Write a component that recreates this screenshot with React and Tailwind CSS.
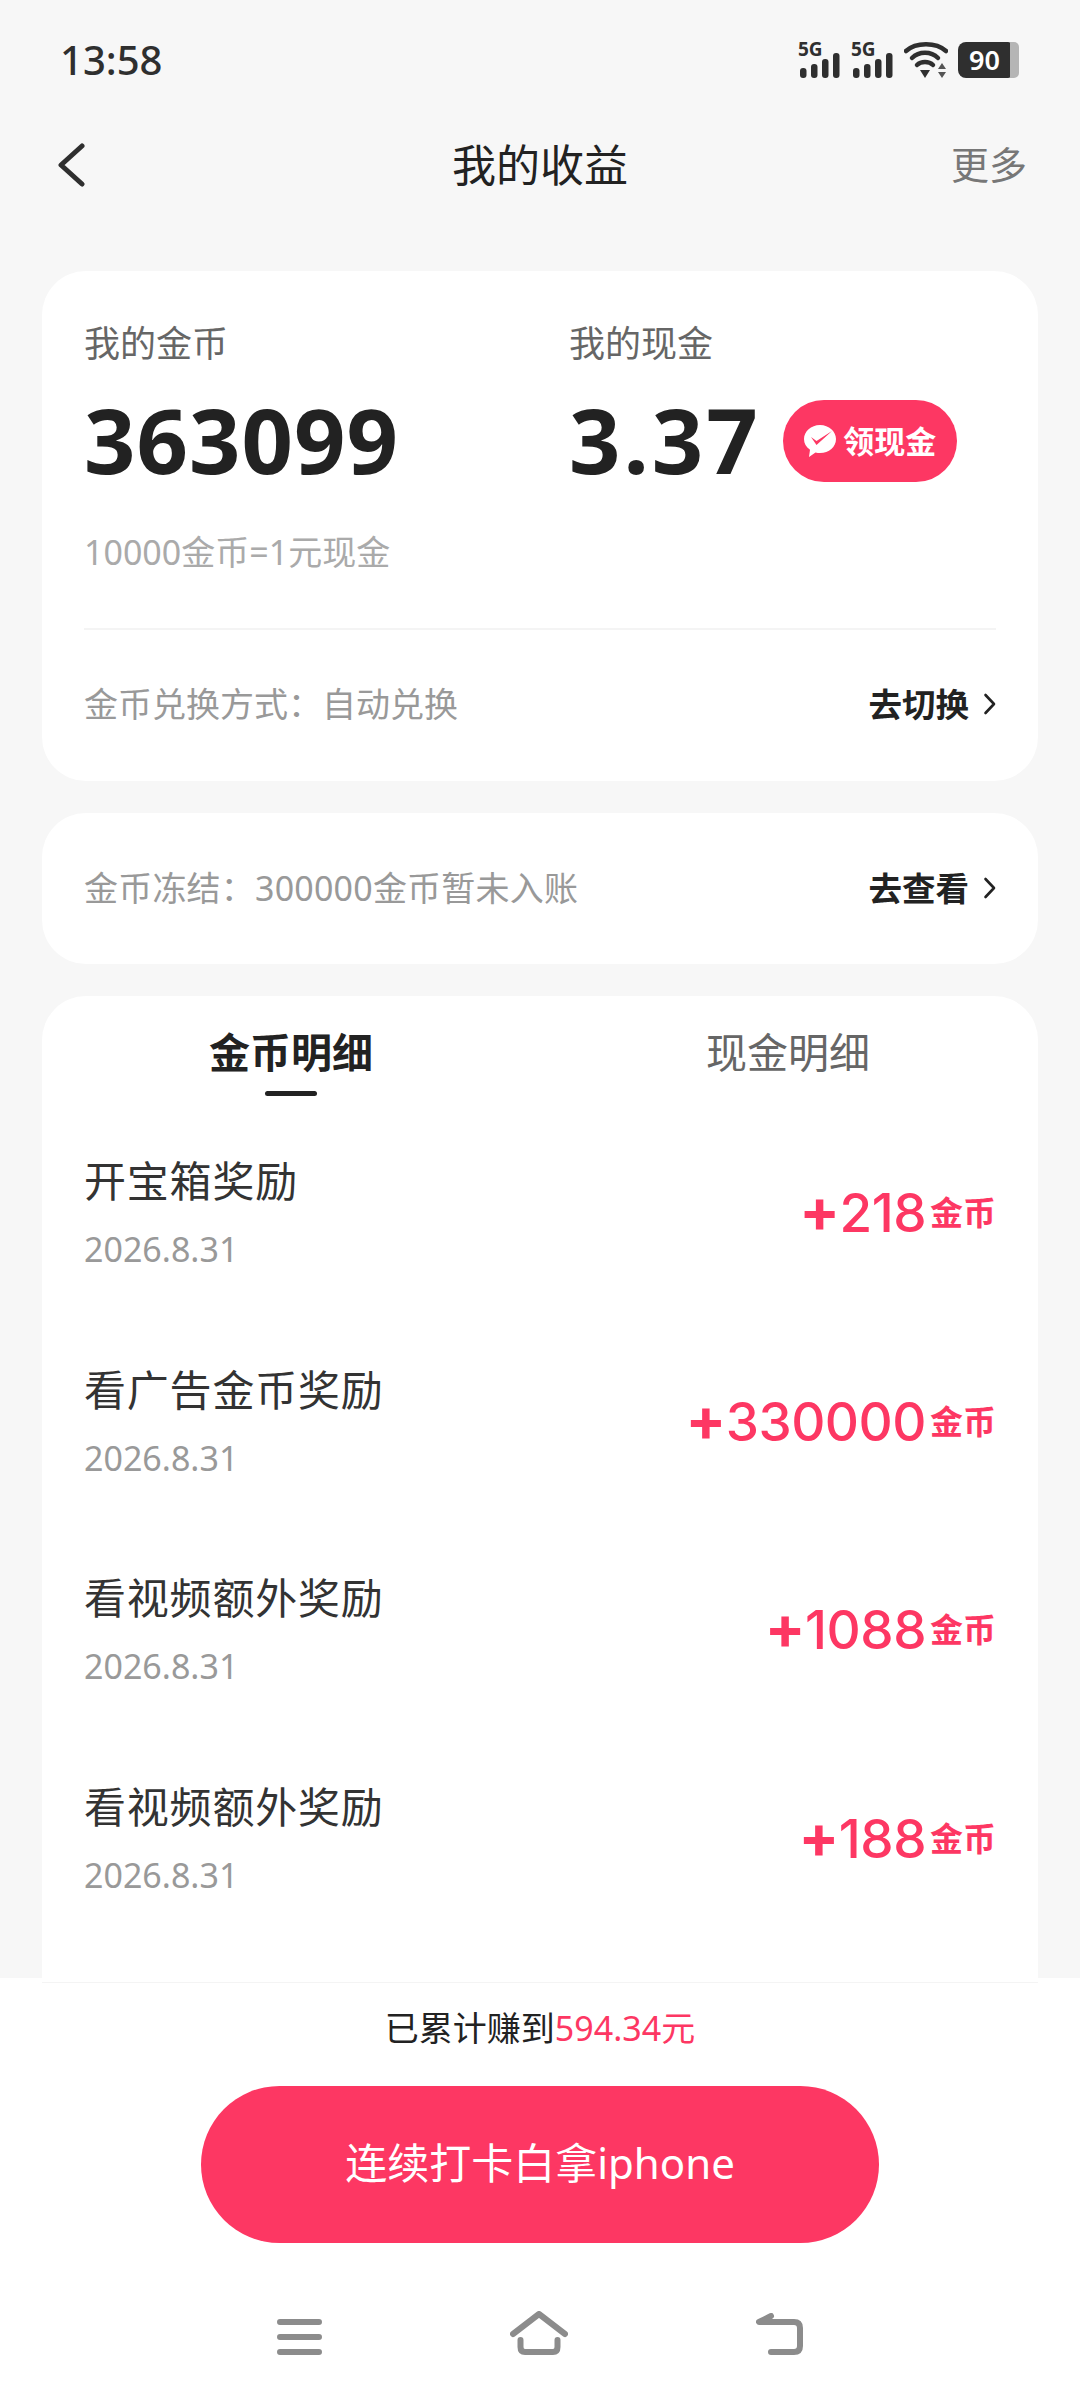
import React from "react";

const records = [
  { title: "开宝箱奖励", date: "2026.8.31", amount: "218" },
  { title: "看广告金币奖励", date: "2026.8.31", amount: "330000" },
  { title: "看视频额外奖励", date: "2026.8.31", amount: "1088" },
  { title: "看视频额外奖励", date: "2026.8.31", amount: "188" },
];

function Signal() {
  return (
    <div className="w-[42px] h-[36px] relative">
      <span className="absolute left-0 top-[-3px] text-[19px] leading-[20px] font-bold text-[#2f2f2f]">5G</span>
      <svg width="42" height="26" viewBox="0 0 42 26" className="absolute left-0 top-[11px]">
        <g fill="#2f2f2f">
          <rect x="2" y="15" width="6.5" height="10" rx="3" />
          <rect x="13" y="11" width="6.5" height="14" rx="3" />
          <rect x="24" y="6" width="6.5" height="19" rx="3" />
          <rect x="35" y="0" width="6.5" height="25" rx="3" />
        </g>
      </svg>
    </div>
  );
}

function StatusIcons() {
  return (
    <div className="flex items-center">
      <Signal />
      <div className="w-[11px]" />
      <Signal />
      <svg width="44" height="36" viewBox="0 0 44 36" className="ml-[11px]">
        <g fill="none" stroke="#2f2f2f" strokeWidth="4.5" strokeLinecap="round">
          <path d="M2 9 C12 0 32 0 42 9" />
          <path d="M8 16 C15 9 27 9 34 16" />
          <path d="M13 23 C17 19 25 19 29 23" />
        </g>
        <path d="M16 28 H26 L21 36 Z" fill="#2f2f2f" />
        <path d="M34 27 L38 21 L42 27 Z M34 30 H42 L38 36 Z" fill="#555555" />
      </svg>
      <div className="flex items-center ml-[10px]">
        <div className="w-[53px] h-[36px] rounded-l-[8px] rounded-r-[3px] bg-[#2f2f2f] text-white text-[27px] font-semibold flex items-center justify-center leading-none">
          90
        </div>
        <div className="w-[9px] h-[36px] -ml-[1px] rounded-r-[5px] bg-[#b5b5b5]" />
      </div>
    </div>
  );
}

function Chevron() {
  return (
    <svg width="13" height="22" viewBox="0 0 13 22" fill="none" stroke="#222222" strokeWidth="2.6" strokeLinecap="round" strokeLinejoin="round">
      <path d="M2.5 2 L11 11 L2.5 20" />
    </svg>
  );
}

function ActionLink({ label }) {
  return (
    <div className="flex items-center gap-[14px]">
      <span className="text-[33.5px] leading-[40px] font-bold text-[#222222]">{label}</span>
      <Chevron />
    </div>
  );
}

function WeChatPay() {
  return (
    <svg width="34" height="34" viewBox="0 0 34 34">
      <path d="M17 1 C26 1 33 7.5 33 15 C33 23 26 29 17 29 C15.5 29 14 28.8 12.5 28.4 L6 33 L7 25.8 C3 23 1 19.5 1 15 C1 7.5 8 1 17 1 Z" fill="#ffffff" />
      <path d="M8 13 L13.5 17 L29 7 L13.5 21 Z" fill="#fd3763" />
    </svg>
  );
}

function RecordRow({ title, date, amount }) {
  return (
    <div className="h-[208.5px] flex items-start justify-between">
      <div className="flex flex-col">
        <span className="text-[42px] leading-[52px] text-[#333333] tracking-[0.8px]">{title}</span>
        <span className="mt-[20px] text-[34px] leading-[44px] text-[#999999]">{date}</span>
      </div>
      <div className="flex items-center gap-[4px] mt-[20px] text-[#fd3763]">
        <span className="text-[53px] leading-[70px] font-medium tracking-[-0.5px]" style={{ fontFamily: "Inter, sans-serif" }}>
          <span className="text-[60px] font-bold">+</span>
          {amount}
        </span>
        <span className="text-[33px] leading-[40px] font-bold mt-[3px]">金币</span>
      </div>
    </div>
  );
}

function NavIcons() {
  return (
    <div className="flex items-end justify-between w-[527px] mx-auto">
      <svg width="45" height="36" viewBox="0 0 45 36" fill="none" stroke="#8c8c8c" strokeWidth="6" strokeLinecap="round">
        <path d="M3 3 H42 M3 18 H42 M3 33 H42" />
      </svg>
      <svg width="58" height="44" viewBox="0 0 58 44" fill="none" stroke="#8c8c8c" strokeWidth="6" strokeLinecap="round" strokeLinejoin="round">
        <path d="M3 23 L29 3 L55 23" />
        <path d="M10.5 29 V36 Q10.5 41 15 41 H43 Q47.5 41 47.5 36 V29" />
      </svg>
      <svg width="48" height="42" viewBox="0 0 48 42" fill="none" stroke="#8c8c8c" strokeWidth="6" strokeLinecap="round" strokeLinejoin="round">
        <path d="M15 3 L3 9 H38 Q44 9 44 15 V33 Q44 39 38 39 H15" />
      </svg>
    </div>
  );
}

export default function App() {
  return (
    <div
      className="w-[1080px] h-[2400px] bg-[#f7f7f7] flex flex-col overflow-hidden"
      style={{ fontFamily: '"Noto Sans", "Noto Sans CJK SC", sans-serif' }}
    >
      <div className="h-[120px] shrink-0 flex items-center justify-between pl-[60px] pr-[61px] pb-[1px]">
        <span className="text-[40px] leading-none font-medium text-[#2f2f2f]">13:58</span>
        <StatusIcons />
      </div>

      <div className="h-[90px] shrink-0 relative flex items-center justify-center">
        <svg width="28" height="44" viewBox="0 0 28 44" fill="none" stroke="#2f2f2f" strokeWidth="5" strokeLinecap="round" strokeLinejoin="round" className="absolute left-[57px] top-[23px]">
          <path d="M25 3 L4 22 L25 41" />
        </svg>
        <span className="text-[44px] leading-[56px] text-[#222222]">我的收益</span>
        <span className="absolute right-[53px] top-[19px] text-[38px] leading-[50px] text-[#777777]">更多</span>
      </div>

      <div className="flex-1 min-h-0 overflow-hidden px-[42px] pt-[61px] flex flex-col gap-[32px]">
        <div className="h-[510px] shrink-0 bg-white rounded-[44px] px-[42px] flex flex-col">
          <div className="flex pt-[50px]">
            <div className="w-[485px]">
              <div className="text-[36px] leading-[46px] text-[#666666]">我的金币</div>
              <div className="mt-[14px] text-[90px] leading-[116px] font-bold text-[#222222] tracking-[1px]">363099</div>
            </div>
            <div>
              <div className="text-[36px] leading-[46px] text-[#666666]">我的现金</div>
              <div className="mt-[14px] flex items-center gap-[22px]">
                <span className="text-[90px] leading-[116px] font-bold text-[#222222] tracking-[3px]">3.37</span>
                <div className="w-[174px] h-[82px] mt-[4px] rounded-full bg-[#fd3763] flex items-center justify-center gap-[6px]">
                  <WeChatPay />
                  <span className="text-[31px] leading-[40px] font-bold text-white">领现金</span>
                </div>
              </div>
            </div>
          </div>
          <div className="mt-[33px] text-[34px] leading-[44px] text-[#aaaaaa]">10000金币=1元现金</div>
          <div className="mt-[54px] border-t-2 border-[#f4f4f4]" />
          <div className="mt-[52px] flex items-center justify-between">
            <span className="text-[34px] leading-[44px] text-[#999999]">金币兑换方式：自动兑换</span>
            <ActionLink label="去切换" />
          </div>
        </div>

        <div className="h-[151px] shrink-0 bg-white rounded-[44px] px-[42px] pb-[2px] flex items-center justify-between">
          <span className="text-[34px] leading-[44px] text-[#999999] tracking-[0.2px]">金币冻结：300000金币暂未入账</span>
          <ActionLink label="去查看" />
        </div>

        <div className="flex-1 bg-white rounded-t-[44px] px-[42px] flex flex-col">
          <div className="h-[159px] shrink-0 flex relative">
            <div className="w-[408px] pl-[125px] pt-[28px] text-[41px] leading-[56px] font-bold text-[#222222]">金币明细</div>
            <div className="pl-[214px] pt-[28px] text-[41px] leading-[56px] text-[#666666] whitespace-nowrap">现金明细</div>
            <div className="absolute left-[181px] top-[95px] w-[52px] h-[5px] rounded-full bg-[#222222]" />
          </div>
          {records.map((r, i) => (
            <RecordRow key={i} title={r.title} date={r.date} amount={r.amount} />
          ))}
        </div>
      </div>

      <div className="h-[422px] shrink-0 bg-white flex flex-col items-center">
        <div className="mt-[4px] w-[996px] border-t border-[#f4f4f4]" />
        <div className="mt-[23px] text-[34px] leading-[44px] text-[#222222]">
          已累计赚到<span className="text-[#fd3763]">594.34元</span>
        </div>
        <div className="mt-[36px] w-[678px] h-[157px] pb-[4px] rounded-full bg-[#fd3763] flex items-center justify-center text-[42px] leading-[56px] text-white">
          连续打卡白拿iphone
        </div>
        <div className="mt-[68px] w-full">
          <NavIcons />
        </div>
      </div>
    </div>
  );
}
